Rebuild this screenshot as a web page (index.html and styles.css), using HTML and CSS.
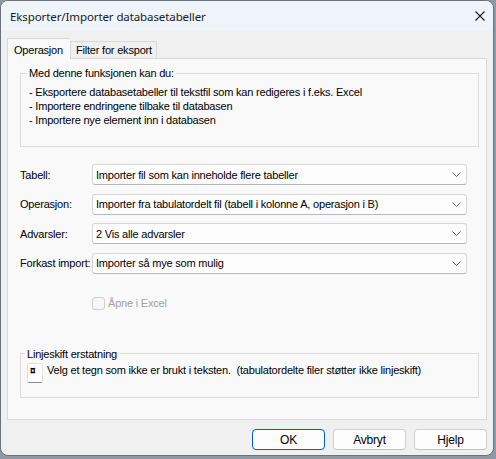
FILE: index.html
```html
<!DOCTYPE html>
<html lang="no">
<head>
<meta charset="utf-8">
<title>Eksporter/Importer databasetabeller</title>
<link rel="stylesheet" href="styles.css">
</head>
<body>
<div class="window">
  <div class="titlebar">
    <span class="title">Eksporter/Importer databasetabeller</span>
    <svg class="close" width="10" height="10" viewBox="0 0 10 10"><path d="M0.5 0.5 L9.5 9.5 M9.5 0.5 L0.5 9.5" stroke="#1b1b1b" stroke-width="1.1" fill="none"/></svg>
  </div>
  <div class="client">
    <div class="tabs">
      <div class="tab active">Operasjon</div>
      <div class="tab">Filter for eksport</div>
    </div>
    <div class="panel">
      <fieldset class="group info">
        <legend>Med denne funksjonen kan du:</legend>
        <div class="line">- Eksportere databasetabeller til tekstfil som kan redigeres i f.eks. Excel</div>
        <div class="line">- Importere endringene tilbake til databasen</div>
        <div class="line">- Importere nye element inn i databasen</div>
      </fieldset>
      <div class="form">
        <div class="row">
          <span class="label">Tabell:</span>
          <div class="combo"><span class="value">Importer fil som kan inneholde flere tabeller</span><svg class="chev" width="9" height="5" viewBox="0 0 9 5"><path d="M0.5 0.5 L4.5 4.5 L8.5 0.5" stroke="#5f5f5f" fill="none"/></svg></div>
        </div>
        <div class="row">
          <span class="label">Operasjon:</span>
          <div class="combo"><span class="value">Importer fra tabulatordelt fil (tabell i kolonne A, operasjon i B)</span><svg class="chev" width="9" height="5" viewBox="0 0 9 5"><path d="M0.5 0.5 L4.5 4.5 L8.5 0.5" stroke="#5f5f5f" fill="none"/></svg></div>
        </div>
        <div class="row">
          <span class="label">Advarsler:</span>
          <div class="combo"><span class="value">2 Vis alle advarsler</span><svg class="chev" width="9" height="5" viewBox="0 0 9 5"><path d="M0.5 0.5 L4.5 4.5 L8.5 0.5" stroke="#5f5f5f" fill="none"/></svg></div>
        </div>
        <div class="row">
          <span class="label">Forkast import:</span>
          <div class="combo"><span class="value">Importer så mye som mulig</span><svg class="chev" width="9" height="5" viewBox="0 0 9 5"><path d="M0.5 0.5 L4.5 4.5 L8.5 0.5" stroke="#5f5f5f" fill="none"/></svg></div>
        </div>
      </div>
      <div class="check">
        <span class="box"></span>
        <span class="check-label">Åpne i Excel</span>
      </div>
      <fieldset class="group nl">
        <legend>Linjeskift erstatning</legend>
        <div class="nl-row">
          <div class="charbox">¤</div>
          <span class="nl-text">Velg et tegn som ikke er brukt i teksten.&nbsp; (tabulatordelte filer støtter ikke linjeskift)</span>
        </div>
      </fieldset>
    </div>
    <div class="buttons">
      <div class="btn default">OK</div>
      <div class="btn">Avbryt</div>
      <div class="btn">Hjelp</div>
    </div>
  </div>
</div>
</body>
</html>
```
FILE: styles.css
```css
* { box-sizing: border-box; }
html, body { margin: 0; padding: 0; }
body {
  width: 496px;
  height: 459px;
  background: #8e99a3;
  font-family: "Liberation Sans", Arial, sans-serif;
  font-size: 11px;
  letter-spacing: -0.2px;
  color: #000;
  overflow: hidden;
}
.window {
  width: 494px;
  height: 456px;
  border: 1px solid #6c7379;
  border-radius: 8px;
  overflow: hidden;
  background: #f0f0f0;
  display: flex;
  flex-direction: column;
}
.titlebar {
  height: 30px;
  background: #eef4fa;
  display: flex;
  align-items: center;
  justify-content: space-between;
  padding: 0 8px 0 9px;
}
.title {
  font-family: "Noto Sans", "Open Sans", sans-serif;
  font-size: 11.5px;
  letter-spacing: -0.1px;
  color: #1a1a1a;
}
.close { display: block; }
.client {
  flex: 1;
  padding: 7px 6px 0 6px;
  display: flex;
  flex-direction: column;
}
.tabs {
  height: 20px;
  display: flex;
  align-items: flex-end;
  position: relative;
  z-index: 1;
}
.tab {
  height: 17px;
  padding: 0 4px 0 5px;
  border: 1px solid #d9d9d9;
  border-bottom: none;
  background: #f0f0f0;
  line-height: 16px;
  white-space: nowrap;
}
.tab.active {
  height: 21px;
  margin-bottom: -1px;
  width: 63px;
  padding: 3px 0 0 6px;
  background: #f9f9f9;
  border-right: none;
}
.panel {
  height: 362px;
  border: 1px solid #d9d9d9;
  background: #f9f9f9;
  padding: 7px 7px 0 12px;
  display: flex;
  flex-direction: column;
}
.group {
  margin: 0;
  border: 1px solid #dcdcdc;
  min-width: 0;
}
.group legend {
  padding: 0 2px;
  margin-left: -2px;
  line-height: 14px;
}
.info {
  padding: 5px 8px 19px 8px;
}
.line { line-height: 14px; }
.form {
  margin-top: 17px;
  display: flex;
  flex-direction: column;
  gap: 8.5px;
}
.row {
  display: flex;
  align-items: center;
}
.label {
  width: 72px;
  white-space: nowrap;
}
.combo {
  width: 375px;
  height: 21px;
  background: #fdfdfd;
  border: 1px solid #d6d6d6;
  border-bottom-color: #b8b8b8;
  border-radius: 3px;
  display: flex;
  align-items: center;
  justify-content: space-between;
  padding: 0 5px 0 3px;
}
.chev { display: block; }
.check {
  margin-top: 23px;
  margin-left: 72px;
  display: flex;
  align-items: center;
  height: 13px;
}
.box {
  width: 13px;
  height: 13px;
  border: 1px solid #cfcfcf;
  border-radius: 3px;
  background: #f7f7f7;
}
.check-label {
  margin-left: 3px;
  color: #a2a2a2;
  line-height: 13px;
}
.nl {
  margin-top: 37px;
  padding: 2px 6px 14px 6px;
}
.nl-row {
  display: flex;
  align-items: flex-start;
}
.charbox {
  width: 16px;
  height: 20px;
  background: #fff;
  border: 1px solid #e2e2e2;
  border-bottom-color: #8c8c8c;
  border-radius: 2px;
  font-size: 10px;
  font-weight: bold;
  line-height: 13px;
  padding-left: 2px;
}
.nl-text {
  margin-left: 4px;
  line-height: 14px;
}
.buttons {
  margin-top: 9px;
  display: flex;
  justify-content: flex-end;
  gap: 8px;
}
.btn {
  width: 73px;
  height: 21px;
  border: 1px solid #d0d0d0;
  border-bottom-color: #c2c2c2;
  border-radius: 4px;
  background: #fdfdfd;
  display: flex;
  align-items: center;
  justify-content: center;
  font-size: 12px;
}
.btn.default {
  border: 1px solid #005fb8;
}
```
